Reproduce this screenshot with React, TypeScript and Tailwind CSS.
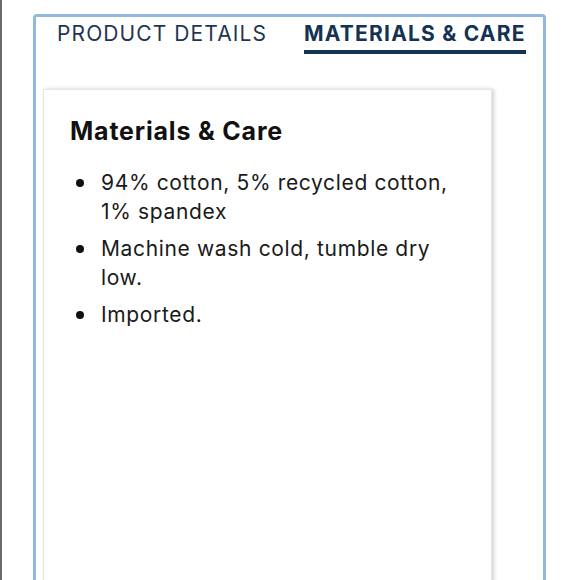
const items = [
  '94% cotton, 5% recycled cotton, 1% spandex',
  'Machine wash cold, tumble dry low.',
  'Imported.',
]

export default function App() {
  return (
    <div className="w-[580px] h-[580px] overflow-hidden bg-white border-l-2 border-[#6b6b6b] font-['Inter',sans-serif]">
      <div className="ml-[31px] mt-[14px] w-[513px] h-[600px] border-[3px] border-b-0 border-[#8fb8e3] rounded-t-[4px]">
        <div className="flex pt-[3px] pl-[21px]">
          <div className="text-[21px] leading-[28px] text-[#1f3550] tracking-[1.1px]">PRODUCT DETAILS</div>
          <div className="ml-[37px] flex flex-col">
            <div className="text-[21px] leading-[28px] font-bold text-[#143252] tracking-[1.2px]">MATERIALS &amp; CARE</div>
            <div className="mt-[2px] h-[4px] bg-[#143252]" />
          </div>
        </div>
        <div className="ml-[7px] mt-[35px] w-[449px] h-[520px] bg-white border border-[#e6e6e6] shadow-[2px_0_4px_rgba(0,0,0,0.18)] pl-[26px] pr-[20px] pt-[25px]">
          <h2 className="text-[25px] leading-[32px] font-bold text-[#111] tracking-[0.8px]">Materials &amp; Care</h2>
          <ul className="mt-[21px] text-[21px] leading-[29px] text-[#1a1a1a] tracking-[0.65px] flex flex-col gap-[8px]">
            {items.map((t) => (
              <li key={t} className="flex">
                <span className="w-[31px] h-[29px] shrink-0 flex items-center pl-[6px]">
                  <span className="w-[8px] h-[8px] rounded-full bg-[#111]" />
                </span>
                <span>{t}</span>
              </li>
            ))}
          </ul>
        </div>
      </div>
    </div>
  )
}
